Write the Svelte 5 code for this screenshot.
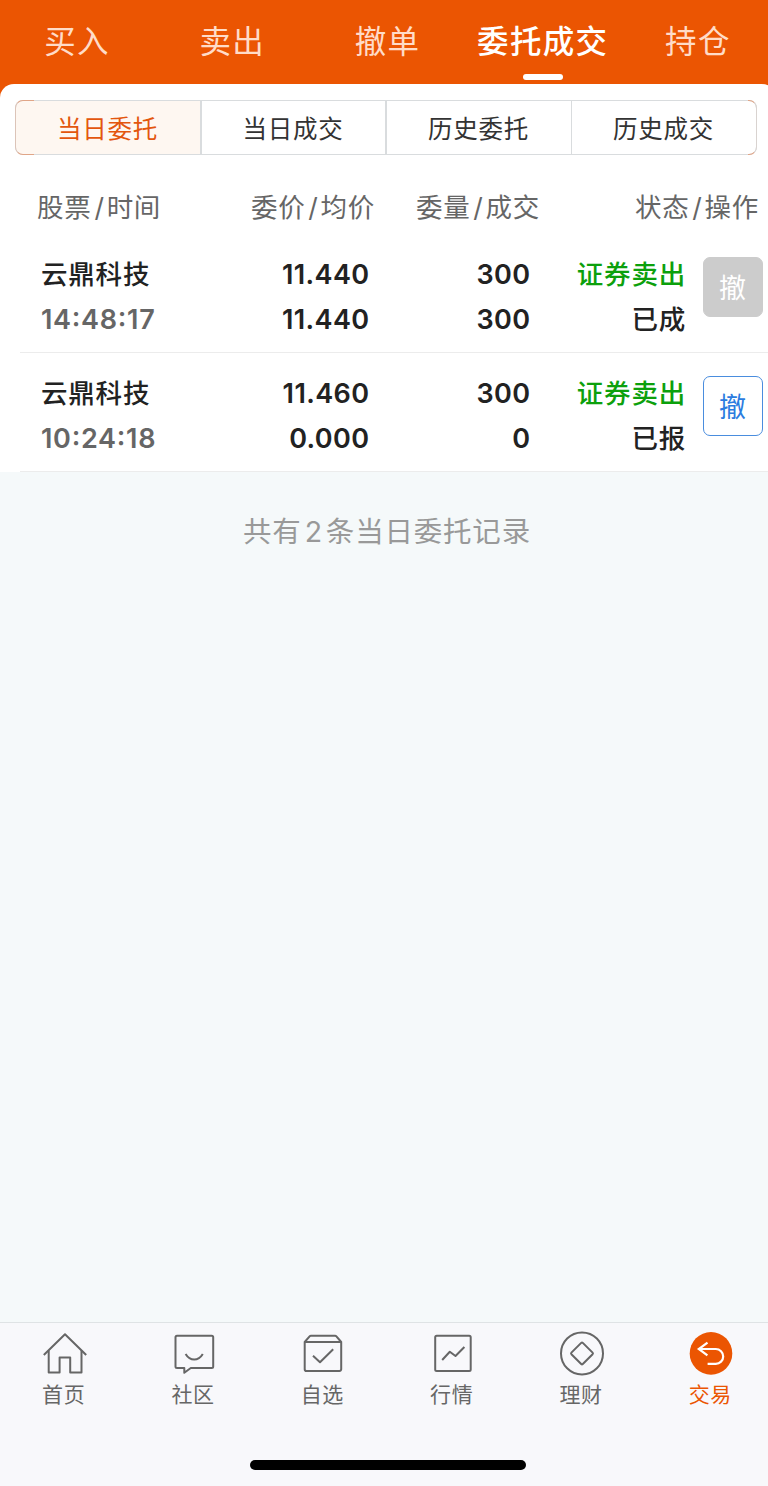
<script>
  const tabs = ["买入", "卖出", "撤单", "委托成交", "持仓"];
  const segments = ["当日委托", "当日成交", "历史委托", "历史成交"];
  const columns = [
    ["股票", "时间"],
    ["委价", "均价"],
    ["委量", "成交"],
    ["状态", "操作"]
  ];
  const orders = [
    {
      name: "云鼎科技",
      time: "14:48:17",
      price: "11.440",
      average: "11.440",
      amount: "300",
      filled: "300",
      side: "证券卖出",
      status: "已成",
      cancellable: false
    },
    {
      name: "云鼎科技",
      time: "10:24:18",
      price: "11.460",
      average: "0.000",
      amount: "300",
      filled: "0",
      side: "证券卖出",
      status: "已报",
      cancellable: true
    }
  ];
  const nav = [
    { icon: "home", label: "首页" },
    { icon: "community", label: "社区" },
    { icon: "watchlist", label: "自选" },
    { icon: "market", label: "行情" },
    { icon: "wealth", label: "理财" },
    { icon: "trade", label: "交易" }
  ];

  let tab = $state("委托成交");
  let segment = $state("当日委托");
  let page = $state("trade");
</script>

<div class="viewport">
  <div class="screen">
    <header class="tabs">
      {#each tabs as label}
        <button class="tab" class:is-active={tab === label} onclick={() => (tab = label)}>
          {label}
        </button>
      {/each}
    </header>

    <main>
      <section class="panel">
        <div class="segments">
          {#each segments as label}
            <button
              class="segment"
              class:is-active={segment === label}
              onclick={() => (segment = label)}>{label}</button
            >
          {/each}
        </div>

        <div class="head">
          {#each columns as [top, bottom]}
            <span>{top}<i>/</i>{bottom}</span>
          {/each}
        </div>

        {#each orders as order}
          <div class="order">
            <div class="cell name">
              <span>{order.name}</span>
              <span class="time">{order.time}</span>
            </div>
            <div class="cell num">
              <span>{order.price}</span>
              <span>{order.average}</span>
            </div>
            <div class="cell num">
              <span>{order.amount}</span>
              <span>{order.filled}</span>
            </div>
            <div class="cell state">
              <span class="side">{order.side}</span>
              <span>{order.status}</span>
            </div>
            <button class="cancel" disabled={!order.cancellable}>撤</button>
          </div>
        {/each}
      </section>

      <p class="summary">共有<span>{orders.length}</span>条当日委托记录</p>
    </main>

    <nav>
      {#each nav as item}
        <button
          class="nav-item"
          class:is-active={page === item.icon}
          onclick={() => (page = item.icon)}
        >
          <svg viewBox="0 0 44 44" width="44" height="44" aria-hidden="true">
            {#if item.icon === "home"}
              <path d="M0.8 23 22 2.3 43.2 23" />
              <path d="M5.7 18.5V40.6H16.6V25.6H27.2V40.6H38.5V18.5" />
            {:else if item.icon === "community"}
              <path
                d="M5 3.7H39.7a1.5 1.5 0 0 1 1.5 1.5V34.5a1.5 1.5 0 0 1-1.5 1.5H18.8L12.3 40.8V36H5a1.5 1.5 0 0 1-1.5-1.5V5.2A1.5 1.5 0 0 1 5 3.7Z"
              />
              <path d="M13.6 22Q17 27.6 22.2 27.6T30.8 22" />
            {:else if item.icon === "watchlist"}
              <path
                d="M3.7 10 8.6 4.3Q9.1 3.7 10 3.7H34Q34.9 3.7 35.4 4.3L40.2 10V37.2a1.8 1.8 0 0 1-1.8 1.8H5.5a1.8 1.8 0 0 1-1.8-1.8ZH40.2"
              />
              <path d="M12 23.7 19 30.3 32.2 17.3" />
            {:else if item.icon === "market"}
              <rect x="4.2" y="3.7" width="35.5" height="35.4" rx="1.5" />
              <path d="M11.2 28 18.8 19.7 24.5 24 33.4 15" />
            {:else if item.icon === "wealth"}
              <circle cx="22" cy="21.4" r="21" />
              <path
                d="M21.2 10.9a1.2 1.2 0 0 1 1.6 0L32.6 20.6a1.2 1.2 0 0 1 0 1.6L22.8 32a1.2 1.2 0 0 1-1.6 0L11.4 22.2a1.2 1.2 0 0 1 0-1.6Z"
              />
            {:else}
              <circle class="disc" cx="22" cy="21.4" r="21.3" />
              <path
                class="arrow"
                d="M18.5 10.6 9.8 17 18.4 23.4M9.8 17H26.8a7.4 7.4 0 0 1 0 14.8H18.6"
              />
            {/if}
          </svg>
          <span>{item.label}</span>
        </button>
      {/each}
      <div class="home-bar"></div>
    </nav>
  </div>
</div>

<style>
  :global(body) {
    background: #f5f9fa;
  }

  .viewport {
    width: 100%;
    height: 1486px;
    overflow: hidden;
    font-family: "Inter", "Noto Sans CJK SC", sans-serif;
    color: #222;
  }

  .screen {
    width: 776px;
    height: 100%;
    display: flex;
    flex-direction: column;
    background: #f5f9fa;
  }

  button {
    appearance: none;
    padding: 0;
    margin: 0;
    border: 0;
    background: none;
    color: inherit;
    font: inherit;
  }

  .tabs {
    flex: none;
    display: grid;
    grid-template-columns: repeat(5, 1fr);
    height: 100px;
    background: #eb5502;
  }

  .tab {
    position: relative;
    height: 84px;
    padding-right: 1px;
    color: #ffdcc8;
    font-size: 31.5px;
    line-height: 80px;
    letter-spacing: 1.3px;
    white-space: nowrap;
  }

  .tab.is-active {
    color: #fff;
    font-weight: 500;
  }

  .tab.is-active::after {
    content: "";
    position: absolute;
    left: calc(50% - 20px);
    bottom: 4px;
    width: 40px;
    height: 6px;
    border-radius: 3px;
    background: #fff;
  }

  main {
    flex: 1;
    margin-top: -16px;
  }

  .panel {
    position: relative;
    padding-top: 16px;
    border-radius: 14px 14px 0 0;
    background: #fff;
  }

  .segments {
    position: relative;
    display: grid;
    grid-template-columns: 184px 185px 186px 1fr;
    box-sizing: border-box;
    width: 742px;
    height: 55px;
    margin-left: 15px;
    border: 1px solid #d9dcde;
    border-radius: 8px;
  }

  /* tinted rounded ends over the grey frame */
  .segments::before,
  .segments::after {
    content: "";
    position: absolute;
    top: -1px;
    bottom: -1px;
    width: 18px;
    border: 1px solid #e0a587;
    pointer-events: none;
  }

  .segments::before {
    left: -1px;
    border-right: 0;
    border-left-color: #dcc4b8;
    border-radius: 8px 0 0 8px;
  }

  .segments::after {
    right: -1px;
    width: 8px;
    border-left: 0;
    border-right-color: #d9d3d0;
    border-radius: 0 8px 8px 0;
  }

  .segment {
    padding-right: 1px;
    font-size: 24.5px;
    letter-spacing: 0.8px;
    color: #333;
  }

  .segment + .segment {
    border-left: 2px solid #d9dcde;
  }

  .segment:last-child {
    border-left-width: 1px;
  }

  .segment.is-active {
    border-radius: 7px 0 0 7px;
    background: #fef7f1;
    color: #e3560e;
  }

  .head {
    display: grid;
    grid-template-columns: 138px 200px 165px 1fr;
    height: 79px;
    padding: 0 17px 0 37px;
    color: #666;
    font-size: 26.5px;
    line-height: 105px;
    letter-spacing: 0.7px;
    text-align: right;
    white-space: nowrap;
  }

  .head span:first-child {
    text-align: left;
  }

  .head i {
    margin: 0 2px 0 3px;
    font-style: normal;
  }

  .order {
    display: grid;
    grid-template-columns: 150px 158px 161px 156px 60px;
    box-sizing: border-box;
    height: 119px;
    margin-left: 20px;
    padding: 18px 0 0 21px;
    border-bottom: 1px solid #ececec;
  }

  .cell {
    display: flex;
    flex-direction: column;
    font-size: 26.5px;
    line-height: 45px;
    font-weight: 500;
    letter-spacing: 0.7px;
    white-space: nowrap;
  }

  .num,
  .state {
    text-align: right;
  }

  .num {
    margin-right: -20.5px;
    font-size: 27px;
    font-weight: 600;
    letter-spacing: 0.4px;
  }

  .time {
    color: #666;
    font-size: 27px;
    font-weight: 600;
    font-feature-settings: "case";
    letter-spacing: 0.7px;
  }

  .name span:first-child,
  .state span {
    letter-spacing: 0.8px;
  }

  .state {
    margin-right: -20px;
  }

  .side {
    color: #0ca00c;
  }

  .cancel {
    justify-self: end;
    box-sizing: border-box;
    width: 60px;
    height: 60px;
    margin: 5px -36.5px 0 0;
    padding-bottom: 1px;
    border: 1.5px solid #4a8dde;
    border-radius: 7px;
    color: #2b7ce0;
    font-size: 27px;
  }

  .cancel:disabled {
    border-color: #ccc;
    background: #ccc;
    color: #fff;
  }

  .summary {
    margin: 0;
    padding: 38px 2px 0 0;
    color: #999;
    font-size: 28.5px;
    line-height: 44px;
    letter-spacing: 0.8px;
    text-align: center;
  }

  .summary span {
    margin: 0 3px;
  }

  nav {
    flex: none;
    position: relative;
    display: grid;
    grid-template-columns: repeat(6, 1fr);
    box-sizing: border-box;
    height: 164px;
    border-top: 1px solid #dfe3e5;
    background: #f8f8fb;
  }

  .nav-item {
    display: flex;
    flex-direction: column;
    align-items: center;
    padding-top: 9px;
    height: 90px;
    color: #666;
    font-size: 21px;
    line-height: 38px;
    letter-spacing: 0.6px;
  }

  .nav-item span {
    margin-left: -2px;
  }

  .nav-item.is-active {
    color: #eb5502;
  }

  svg {
    display: block;
    flex: none;
    fill: none;
    stroke: #666;
    stroke-width: 2;
    stroke-linejoin: round;
    overflow: visible;
  }

  .disc {
    fill: #eb5502;
    stroke: none;
  }

  .arrow {
    stroke: #fff;
    stroke-width: 2.2;
    stroke-linejoin: miter;
  }

  .home-bar {
    position: absolute;
    left: 250px;
    bottom: 16px;
    width: 276px;
    height: 10px;
    border-radius: 5px;
    background: #000;
  }
</style>
